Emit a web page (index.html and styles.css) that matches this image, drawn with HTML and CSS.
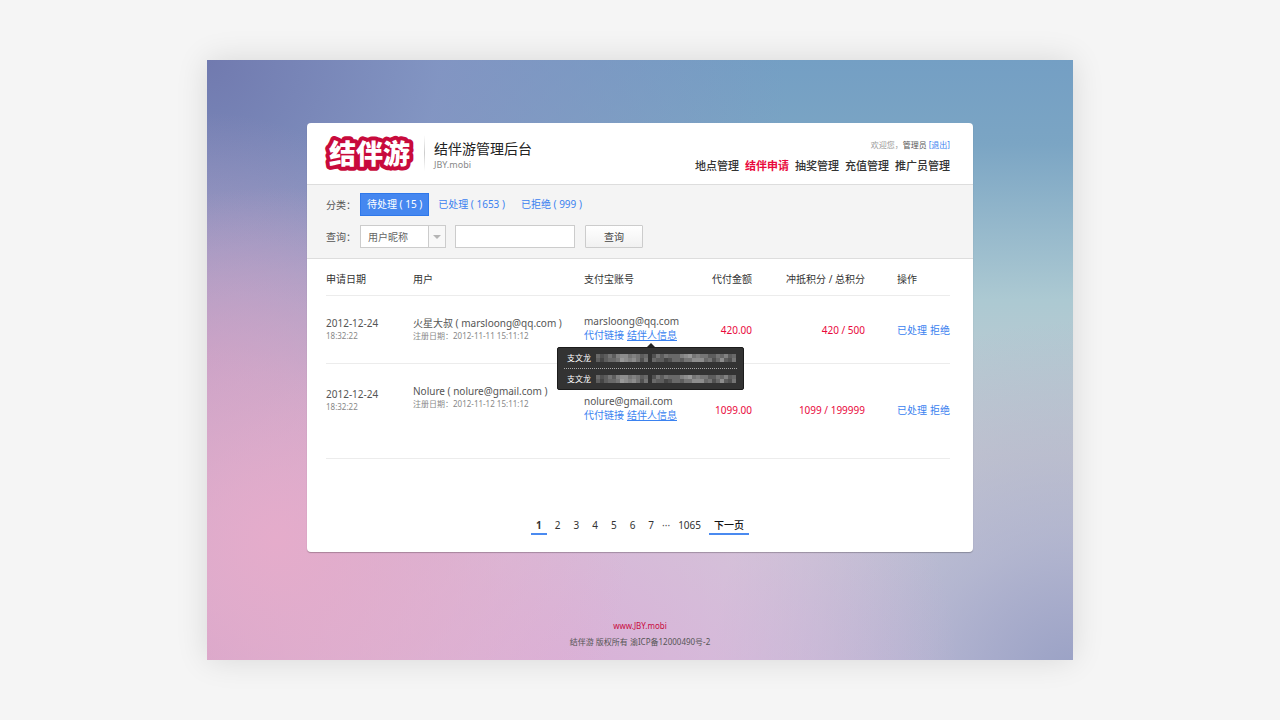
FILE: index.html
```html
<!DOCTYPE html>
<html lang="zh-CN">
<head>
    <meta charset="UTF-8" />
    <title>结伴游管理后台</title>
    <link rel="stylesheet" href="styles.css">
</head>
<body>
    <div class="page">
        <div class="panel">
            <header>
                <svg class="logo" width="92" height="46" viewBox="0 0 92 46" role="img" aria-label="结伴游">
                    <text class="logo-edge" x="6" y="34">结伴游</text>
                    <text class="logo-text" x="6" y="34">结伴游</text>
                </svg>
                <div class="title">
                    <h1>结伴游管理后台</h1>
                    <p>JBY.mobi</p>
                </div>
                <div class="top">
                    <p class="hello">欢迎您，<span>管理员</span> <a href="#">[退出]</a></p>
                    <nav>
                        <a href="#">地点管理</a>
                        <a href="#" class="on">结伴申请</a>
                        <a href="#">抽奖管理</a>
                        <a href="#">充值管理</a>
                        <a href="#">推广员管理</a>
                    </nav>
                </div>
            </header>

            <form class="filter">
                <div class="line">
                    <span class="label">分类：</span>
                    <div class="tabs">
                        <a href="#" class="on">待处理 ( 15 )</a>
                        <a href="#">已处理 ( 1653 )</a>
                        <a href="#">已拒绝 ( 999 )</a>
                    </div>
                </div>
                <div class="line">
                    <label class="label" for="field">查询：</label>
                    <div class="select">
                        <select id="field">
                            <option>用户昵称</option>
                        </select>
                    </div>
                    <input type="text" aria-label="关键字">
                    <button type="button">查询</button>
                </div>
            </form>

            <main>
                <table>
                    <colgroup>
                        <col class="c-date"><col class="c-user"><col><col class="c-money"><col class="c-score"><col class="c-do">
                    </colgroup>
                    <thead>
                        <tr>
                            <th>申请日期</th>
                            <th>用户</th>
                            <th>支付宝账号</th>
                            <th class="num">代付金额</th>
                            <th class="num">冲抵积分 / 总积分</th>
                            <th class="do">操作</th>
                        </tr>
                    </thead>
                    <tbody>
                        <tr>
                            <td>2012-12-24<small>18:32:22</small></td>
                            <td>火星大叔 ( marsloong@qq.com )<small>注册日期：2012-11-11 15:11:12</small></td>
                            <td class="pay">
                                marsloong@qq.com
                                <div class="links">
                                    <a href="#">代付链接</a>
                                    <span class="info">
                                        <a href="#">结伴人信息</a>
                                        <span class="tip">
                                            <span class="tip-row">支文龙 <svg class="mask" width="140" height="8"></svg></span>
                                            <span class="tip-row">支文龙 <svg class="mask" width="140" height="8"></svg></span>
                                        </span>
                                    </span>
                                </div>
                            </td>
                            <td class="num red">420.00</td>
                            <td class="num red">420 / 500</td>
                            <td class="do"><a href="#">已处理</a><a href="#">拒绝</a></td>
                        </tr>
                        <tr class="last">
                            <td class="date">2012-12-24<small>18:32:22</small></td>
                            <td>Nolure ( nolure@gmail.com )<small>注册日期：2012-11-12 15:11:12</small></td>
                            <td class="pay">
                                nolure@gmail.com
                                <div class="links">
                                    <a href="#">代付链接</a>
                                    <span class="info"><a href="#">结伴人信息</a></span>
                                </div>
                            </td>
                            <td class="num red">1099.00</td>
                            <td class="num red">1099 / 199999</td>
                            <td class="do"><a href="#">已处理</a><a href="#">拒绝</a></td>
                        </tr>
                    </tbody>
                </table>
            </main>

            <div class="pager">
                <a href="#" class="on">1</a>
                <a href="#">2</a>
                <a href="#">3</a>
                <a href="#">4</a>
                <a href="#">5</a>
                <a href="#">6</a>
                <a href="#">7</a>
                <span>···</span>
                <a href="#">1065</a>
                <a href="#" class="next">下一页</a>
            </div>
        </div>

        <footer>
            <p><a href="#">www.JBY.mobi</a></p>
            <p>结伴游 版权所有 渝ICP备12000490号-2</p>
        </footer>
    </div>

    <script>
        // 打码：两段灰色方块
        const tones = [
            '53464788676454364655578967664465745',
            '42455698786364544235546688856358436'
        ];
        document.querySelectorAll('.mask').forEach(function (svg) {
            let html = '';
            tones.forEach(function (row, j) {
                for (let i = 0; i < row.length; i++) {
                    if (i === 13) continue;
                    const v = 45 + Number(row[i]) * 12;
                    html += `<rect x="${i * 4}" y="${j * 4}" width="4" height="4" fill="rgb(${v},${v},${v})"/>`;
                }
            });
            svg.innerHTML = html;
        });
    </script>
</body>
</html>
```
FILE: styles.css
```css
* {
    box-sizing: border-box;
}
body {
    margin: 0;
    min-height: 100vh;
    padding: 60px 16px;
    background: #f5f5f5;
    color: #555;
    font: 10px/14px "Noto Sans", "Noto Sans CJK SC", sans-serif;
}
h1, p {
    margin: 0;
    font-weight: normal;
}
a {
    color: #3b82f0;
    text-decoration: none;
}
.page {
    max-width: 866px;
    min-height: 600px;
    margin: 0 auto;
    padding: 63px 100px 9px;
    box-shadow: 0 0 30px rgba(0, 0, 0, 0.12);
    background:
        radial-gradient(circle at 8% 80%, rgba(229, 172, 203, 1) 0%, rgba(229, 172, 203, 0.6) 18%, rgba(229, 172, 203, 0) 38%),
        radial-gradient(circle at 40% 104%, rgba(218, 176, 215, 1) 0%, rgba(218, 176, 215, 0) 50%),
        radial-gradient(circle at 100% 104%, rgba(152, 160, 196, 1) 0%, rgba(160, 167, 200, 0.6) 14%, rgba(185, 190, 208, 0) 34%),
        radial-gradient(circle at 0% 100%, rgba(200, 160, 200, 1) 0%, rgba(200, 160, 200, 0) 30%),
        radial-gradient(circle at 0% 50%, rgba(178, 154, 194, 1) 0%, rgba(172, 150, 192, 0) 27%),
        radial-gradient(circle at 0% 0%, rgba(113, 122, 175, 1) 0%, rgba(133, 146, 194, 0.8) 22%, rgba(135, 155, 200, 0) 55%),
        linear-gradient(to bottom, #749fc4 0%, #7ba5c4 14%, #acc9d2 40%, #cacbd2 66%, #d0cddb 84%, #d0c8de 100%);
}
.panel {
    background: #fff;
    border-radius: 4px;
    box-shadow: 0 1px 1px rgba(0, 0, 0, 0.25);
}
header {
    display: flex;
    height: 61px;
    padding: 7px 23px 0 16px;
}
.logo {
    flex: none;
}
.logo text {
    font: 900 27px "Noto Sans CJK SC", sans-serif;
}
.logo-edge {
    fill: #c80a3c;
    stroke: #c80a3c;
    stroke-width: 8;
    stroke-linejoin: round;
}
.logo-text {
    fill: #fff;
}
.title {
    height: 46px;
    margin-left: 9px;
    padding: 9px 0 0 10px;
    background: linear-gradient(#fff, #ccc, #fff) left / 1px 36px no-repeat;
}
.title h1 {
    color: #222;
    font-size: 14px;
    line-height: 20px;
}
.title p {
    color: #888;
    font-size: 9px;
    line-height: 12px;
}
.top {
    margin-left: auto;
    padding-top: 8px;
    text-align: right;
}
.hello {
    color: #999;
    font-size: 8px;
}
.hello span {
    color: #555;
}
nav {
    display: flex;
    gap: 6px;
    padding-top: 5px;
}
nav a {
    color: #333;
    font-size: 11px;
    font-weight: 500;
    line-height: 18px;
}
nav .on {
    color: #e9083c;
    font-weight: bold;
}

.filter {
    padding: 8px 19px 10px;
    border-top: 1px solid #ddd;
    border-bottom: 1px solid #ddd;
    background: #f4f4f4;
}
.line {
    display: flex;
    align-items: center;
}
.line + .line {
    margin-top: 9px;
}
.label {
    width: 34px;
}
.tabs {
    display: flex;
    gap: 2px;
}
.tabs a {
    padding: 0 7px;
    line-height: 23px;
}
.tabs .on {
    border: 1px solid #2f78ea;
    padding: 0 6px;
    background: #4587f0;
    color: #fff;
    line-height: 21px;
}
select, input, button {
    height: 23px;
    border: 1px solid #ccc;
    border-radius: 0;
    background: #fff;
    color: #666;
    font: inherit;
}
.select {
    position: relative;
}
.select::before {
    content: "";
    position: absolute;
    top: 1px;
    right: 1px;
    width: 16px;
    height: 21px;
    border-left: 1px solid #ccc;
    background: #f8f8f8;
}
.select::after {
    content: "";
    position: absolute;
    top: 10px;
    right: 5px;
    border: 4px solid transparent;
    border-top-color: #b5b5b5;
    border-bottom: 0;
}
select {
    appearance: none;
    display: block;
    width: 86px;
    padding: 0 7px;
}
input {
    width: 120px;
    margin: 0 10px 0 9px;
}
button {
    width: 58px;
    border-radius: 1px;
    background: linear-gradient(#fff, #f1f1f1);
    color: #444;
}

main {
    padding: 0 23px 0 19px;
}
table {
    width: 100%;
    border-spacing: 0;
    table-layout: fixed;
}
.c-date {
    width: 87px;
}
.c-user {
    width: 171px;
}
.c-money {
    width: 56px;
}
.c-score {
    width: 113px;
}
.c-do {
    width: 85px;
}
th, td {
    padding: 0;
    border-bottom: 1px solid #ececec;
    text-align: left;
    white-space: nowrap;
}
th {
    height: 37px;
    padding-top: 4px;
    color: #333;
    font-weight: normal;
}
td {
    height: 68px;
    padding-top: 20px;
    vertical-align: top;
}
td.pay {
    padding-top: 18px;
}
td.num, td.do {
    padding-top: 27px;
}
.last td {
    height: 95px;
}
.last .date {
    padding-top: 23px;
}
.last .pay {
    padding-top: 30px;
}
.last .num, .last .do {
    padding-top: 39px;
}
small {
    display: block;
    color: #888;
    font-size: 8px;
    line-height: 12px;
}
th.num, td.num {
    text-align: right;
}
.red {
    color: #e9083c;
}
.do {
    padding-left: 32px;
}
.do a + a {
    margin-left: 3px;
}
.links {
    display: flex;
    gap: 3px;
}
.info {
    position: relative;
}
.info > a {
    text-decoration: underline;
}
.tip {
    position: absolute;
    top: 19px;
    left: 50%;
    width: 187px;
    margin-left: -95px;
    padding: 0 6px 1px;
    border: 1px solid #1c1c1c;
    border-radius: 2px;
    background: #333;
    color: #fff;
    font-size: 8px;
}
.tip::before {
    content: "";
    position: absolute;
    top: -5px;
    left: 50%;
    margin-left: -4px;
    border: 4px solid transparent;
    border-top: 0;
    border-bottom-color: #222;
}
.tip-row {
    display: flex;
    align-items: center;
    gap: 5px;
    height: 20px;
    padding: 0 3px;
}
.tip-row + .tip-row {
    border-top: 1px dotted #aaa;
}
.mask {
    flex: none;
}

.pager {
    display: flex;
    justify-content: center;
    gap: 3px;
    padding: 58px 0 17px;
    line-height: 16px;
}
.pager a {
    padding: 0 5px;
    border-bottom: 2px solid transparent;
    color: #333;
}
.pager .on {
    border-color: #4a8af0;
    font-weight: bold;
}
.pager .next {
    border-color: #4a8af0;
    color: #111;
    font-weight: 500;
}

footer {
    padding-top: 66px;
    font-size: 8px;
    line-height: 16px;
    text-align: center;
}
footer a {
    color: #c80a3c;
}
```
